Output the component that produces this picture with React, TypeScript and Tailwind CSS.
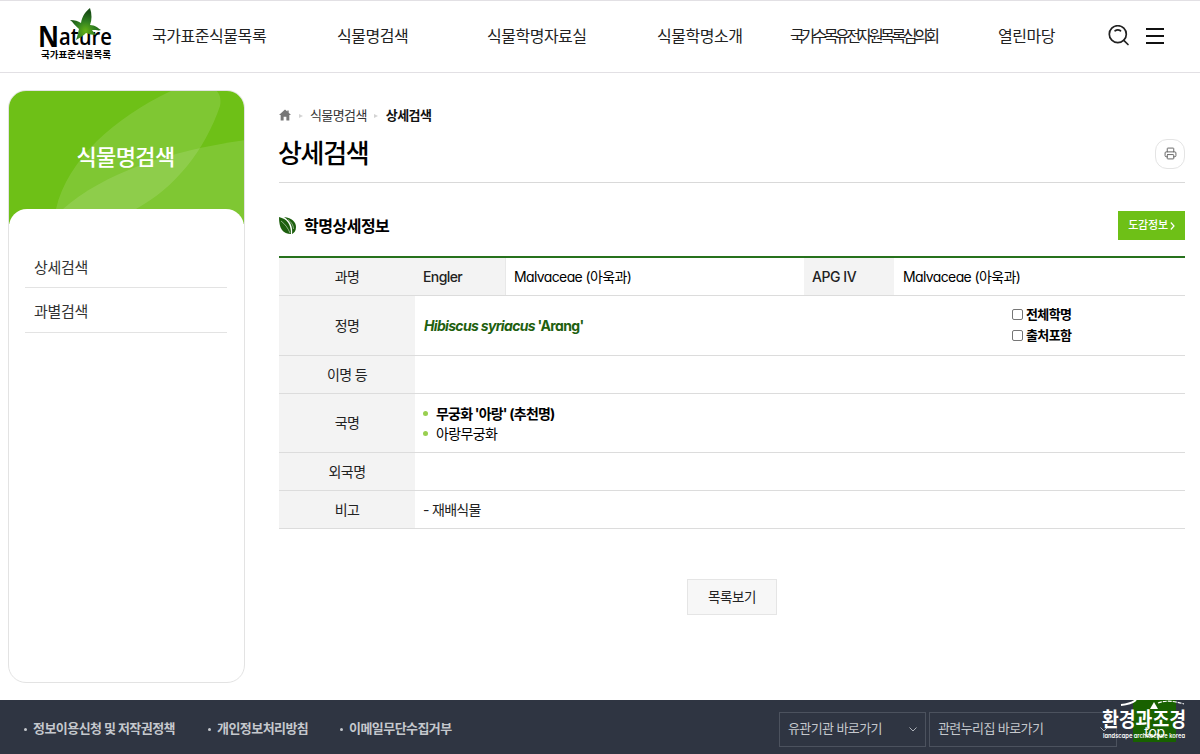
import type { ReactNode } from 'react'
import { Printer } from 'lucide-react'

const NAV = [
  { label: '국가표준식물목록', cls: 'w-[185px] tracking-[-0.45px]' },
  { label: '식물명검색', cls: 'w-[150px] tracking-[-0.45px]' },
  { label: '식물학명자료실', cls: 'w-[170px] tracking-[-0.5px]' },
  { label: '식물학명소개', cls: 'w-[133px] tracking-[-0.45px]' },
  { label: '국가수목유전자원목록심의회', cls: 'w-[208px] tracking-[-3.45px]' },
  { label: '열린마당', cls: 'w-[100px] tracking-[-0.45px]' },
]

function Logo() {
  return (
    <svg width="80" height="56" viewBox="0 0 80 56">
      <defs>
        <radialGradient id="leaf" cx="0.5" cy="0.72" r="0.6">
          <stop offset="0" stopColor="#66b316" />
          <stop offset="0.5" stopColor="#318021" />
          <stop offset="1" stopColor="#174d14" />
        </radialGradient>
      </defs>
      <text x="1" y="38.5" fontFamily="Open Sans" fontWeight="700" fontSize="29" textLength="21" lengthAdjust="spacingAndGlyphs">N</text>
      <text x="22" y="36.5" fontFamily="Open Sans" fontWeight="600" fontSize="23" textLength="53" lengthAdjust="spacingAndGlyphs">ature</text>
      <path
        d="M53 0C49 3 45 8 44 15C41 13 38 12 33 12C36 14 38 18 42 21C41 24 41 27 39 32C43 30 47 27 49 25C52 26 55 27 59 27C58 25 56 24 55 22C59 22 62 23 64 22C61 20 58 17 53 17C55 12 55 6 53 0Z"
        fill="url(#leaf)"
      />
      <text x="4" y="50" fontFamily="Noto Sans CJK KR" fontWeight="700" fontSize="9" textLength="70" lengthAdjust="spacingAndGlyphs">국가표준식물목록</text>
    </svg>
  )
}

function Header() {
  return (
    <header className="flex h-[73px] items-center border-y border-[#e2e0e4] bg-white pb-0.5">
      <div className="w-[115px] shrink-0 pl-[37px]">
        <Logo />
      </div>
      <nav className="ml-[37px] flex text-base text-[#222]">
        {NAV.map((n) => (
          <a key={n.label} className={`shrink-0 whitespace-nowrap ${n.cls}`}>{n.label}</a>
        ))}
      </nav>
      <svg className="ml-[10px] shrink-0" width="22" height="22" viewBox="0 0 22 22" fill="none" stroke="#222" strokeWidth="1.7">
        <circle cx="9.8" cy="9.2" r="8.5" />
        <path d="M15.8 15.3L20 19.5M7.1 5.8C8.8 4.6 10.8 4.6 12.5 5.8" strokeLinecap="round" />
      </svg>
      <svg className="ml-4 shrink-0" width="18" height="18" viewBox="0 0 18 18" fill="#111">
        <path d="M0 1H18V3H0ZM0 8H18V10H0ZM0 15H18V17H0Z" />
      </svg>
    </header>
  )
}

function Sidebar() {
  return (
    <aside className="h-[593px] w-[237px] shrink-0 overflow-hidden rounded-[18px] border border-[#e3e3e3] bg-white">
      <div className="relative -mx-px -mt-px h-[134px] bg-[#6ec017]">
        <svg className="absolute inset-0" width="237" height="134" viewBox="0 0 237 134" fill="#fff" fillOpacity="0.12">
          <path d="M48 119C60 69 107 27 165 0H208Q214 6 212 16C197 60 167 98 128 119V134H45Z" />
          <path d="M55 119C95 83 164 60 237 50V134H48Z" />
        </svg>
        <h2 className="relative pr-0.5 pt-[49px] text-center text-[22px] leading-9 font-medium tracking-[-0.6px] text-white">
          식물명검색
        </h2>
      </div>
      <div className="relative -mt-[15px] rounded-t-[18px] bg-white pl-4 pr-[17px] pt-[38px] text-[15px] tracking-[-0.3px] text-[#333]">
        <a className="flex h-[41px] items-center border-b border-[#e3e3e3] pl-[9px] pt-0.5">상세검색</a>
        <a className="flex h-[45px] items-center border-b border-[#e3e3e3] pl-[9px] pt-[5px]">과별검색</a>
      </div>
    </aside>
  )
}

function LeafIcon() {
  return (
    <svg width="18" height="18" viewBox="0 0 18 18" fill="#1d5f0e">
      <path d="M0 0C8 2 12 7 12 17C4 17 0 12 0 0Z" />
      <path d="M5 0C13 1 17 5 17 10C17 14 15 16 13 17C14 9 11 4 5 0Z" />
      <path d="M2 4C6 7 9 11 11 16" fill="none" stroke="#fff" strokeWidth="0.5" />
      <path d="M9 2.5C12 5 14.5 8 14.5 12" fill="none" stroke="#fff" strokeWidth="0.5" />
    </svg>
  )
}

function Row({ label, height, children }: { label: string; height: string; children?: ReactNode }) {
  return (
    <div className={`flex border-b border-[#dcdcdc] ${height}`}>
      <div className="flex w-[136px] shrink-0 items-center justify-center bg-[#f3f3f3]">{label}</div>
      <div className="flex flex-1 items-center">{children}</div>
    </div>
  )
}

function Check({ label }: { label: string }) {
  return (
    <label className="flex h-[21px] items-center gap-[3px] text-[13px] font-bold tracking-[-0.6px] text-black">
      <span className="h-[11px] w-[11px] rounded-[2px] border border-[#767676] bg-white" />
      {label}
    </label>
  )
}

function DetailTable() {
  return (
    <div className="mt-4 border-t-2 border-[#26711c] text-sm tracking-[-0.6px] text-[#222]">
      <Row label="과명" height="h-[38px]">
        <div className="flex h-full w-[91px] items-center border-r border-[#e8e8e8] bg-[#f3f3f3] pl-2 font-medium tracking-[-0.6px]">Engler</div>
        <div className="w-[298px] pl-2 text-black tracking-[-0.62px]">Malvaceae (아욱과)</div>
        <div className="flex h-full w-[90px] items-center bg-[#f3f3f3] pl-2 font-medium tracking-[-0.45px]">APG IV</div>
        <div className="pl-[9px] text-black tracking-[-0.62px]">Malvaceae (아욱과)</div>
      </Row>
      <Row label="정명" height="h-[60px]">
        <div className="w-[597px] pl-[9px] font-bold tracking-[-0.67px] text-[#1e600f]">
          <i>Hibiscus syriacus</i> 'Arang'
        </div>
        <div className="-mt-px">
          <Check label="전체학명" />
          <Check label="출처포함" />
        </div>
      </Row>
      <Row label="이명 등" height="h-[38px]" />
      <Row label="국명" height="h-[59px]">
        <ul className="pl-2 leading-[21px] text-black">
          <li className="flex items-center gap-2 font-bold tracking-[-0.8px]">
            <span className="h-[5px] w-[5px] rounded-full bg-[#99cf50]" />무궁화 '아랑' (추천명)
          </li>
          <li className="-mt-px flex items-center gap-2">
            <span className="h-[5px] w-[5px] rounded-full bg-[#99cf50]" />아랑무궁화
          </li>
        </ul>
      </Row>
      <Row label="외국명" height="h-[38px]" />
      <Row label="비고" height="h-[38px]">
        <span className="pl-2 tracking-[-0.7px]">- 재배식물</span>
      </Row>
    </div>
  )
}

function Crumb() {
  return <span className="h-0 w-0 border-y-[2.5px] border-l-4 border-y-transparent border-l-[#d3d3d3]" />
}

function Content() {
  return (
    <main className="ml-[34px] w-[906px]">
      <div className="mt-4 flex h-5 items-center text-[13px] tracking-[-0.6px] text-[#333]">
        <svg className="-mt-0.5" width="12" height="12" viewBox="0 0 13 12" fill="#777">
          <path d="M6.5 0L0 6H1.8V12H5V8H8V12H11.2V6H13L10.5 3.6V1H9V2.2Z" />
        </svg>
        <span className="ml-2 flex"><Crumb /></span>
        <span className="ml-[7px]">식물명검색</span>
        <span className="ml-[7px] flex"><Crumb /></span>
        <b className="ml-2 text-[#111]">상세검색</b>
      </div>
      <div className="flex h-[57px] items-center justify-between border-b border-[#d9d9d9]">
        <h1 className="-ml-px text-[26px] font-medium leading-none tracking-[-1.3px] text-black">상세검색</h1>
        <button className="-mt-px flex h-[30px] w-[30px] items-center justify-center rounded-[12px] border border-[#e4e4e4]">
          <Printer size={13} strokeWidth={1.8} color="#666" />
        </button>
      </div>
      <div className="mt-7 flex h-[29px] items-center justify-between">
        <h3 className="flex items-center gap-[7px] text-base font-bold tracking-[-0.5px] text-black">
          <LeafIcon />학명상세정보
        </h3>
        <button className="flex h-[29px] w-[67px] items-center justify-center gap-0.5 bg-[#6ec017] text-[11px] font-medium tracking-[-0.2px] text-white">
          도감정보
          <svg width="5" height="8" viewBox="0 0 5 8" fill="none" stroke="#fff" strokeWidth="1.2">
            <path d="M0.8 0.5L4 4L0.8 7.5" />
          </svg>
        </button>
      </div>
      <DetailTable />
      <div className="mt-[50px] flex justify-center">
        <button className="h-9 w-[90px] border border-[#e5e5e5] bg-[#f7f7f7] text-[13.5px] tracking-[-0.4px] text-[#222]">목록보기</button>
      </div>
    </main>
  )
}

function Arrow() {
  return (
    <svg width="8" height="5" viewBox="0 0 8 5" fill="none" stroke="#aeb2b9">
      <path d="M0.5 0.5L4 4L7.5 0.5" />
    </svg>
  )
}

function Footer() {
  return (
    <footer className="relative flex h-[54px] items-center overflow-hidden bg-[#2f3542] text-[13px] tracking-[-0.55px] text-[#c5c8cd]">
      <ul className="flex w-[779px] pl-6 pt-1 font-bold">
        <li className="flex w-[184px] items-center gap-1.5"><i className="h-[3px] w-[3px] rounded-full bg-[#c5c8cd]" />정보이용신청 및 저작권정책</li>
        <li className="flex w-[132px] items-center gap-1.5"><i className="h-[3px] w-[3px] rounded-full bg-[#c5c8cd]" />개인정보처리방침</li>
        <li className="flex items-center gap-1.5"><i className="h-[3px] w-[3px] rounded-full bg-[#c5c8cd]" />이메일무단수집거부</li>
      </ul>
      <div className="mt-1 flex gap-[3px] text-[13px] tracking-[-0.6px]">
        <div className="flex h-[35px] w-[147px] items-center justify-between border border-[#4c525e] px-2">
          유관기관 바로가기<Arrow />
        </div>
        <div className="flex h-[35px] w-[188px] items-center justify-between border border-[#4c525e] px-2">
          관련누리집 바로가기<Arrow />
        </div>
      </div>
      <div className="absolute left-[1133px] top-0 flex h-[42px] w-[43px] items-end justify-center bg-[#186100] text-sm leading-5 tracking-[-0.3px] text-white">top</div>
      <svg className="absolute left-[1100px] top-0" width="88" height="42" viewBox="0 0 88 42" fill="#fff">
        <path d="M21 5Q31 4 36 0" fill="none" stroke="#fff" strokeWidth="2" />
        <path d="M58 3Q68 -1 84 4" fill="none" stroke="#fff" strokeWidth="1.2" strokeDasharray="4 1" />
        <path d="M54 2L58 9H50Z" />
        <text x="2" y="27" fontFamily="Noto Sans CJK KR" fontWeight="700" fontSize="20" letterSpacing="0" textLength="84" lengthAdjust="spacingAndGlyphs">환경과조경</text>
        <text x="3" y="38" fontFamily="Inter" fontWeight="600" fontSize="6.2" letterSpacing="0" textLength="82" lengthAdjust="spacingAndGlyphs">landscape architecture korea</text>
      </svg>
    </footer>
  )
}

export default function App() {
  return (
    <div className="h-[754px] w-[1200px] overflow-hidden bg-white font-['Inter','Noto_Sans_CJK_KR',sans-serif] [font-feature-settings:'cv11']">
      <Header />
      <div className="flex h-[627px] pl-2 pt-[17px]">
        <Sidebar />
        <Content />
      </div>
      <Footer />
    </div>
  )
}
